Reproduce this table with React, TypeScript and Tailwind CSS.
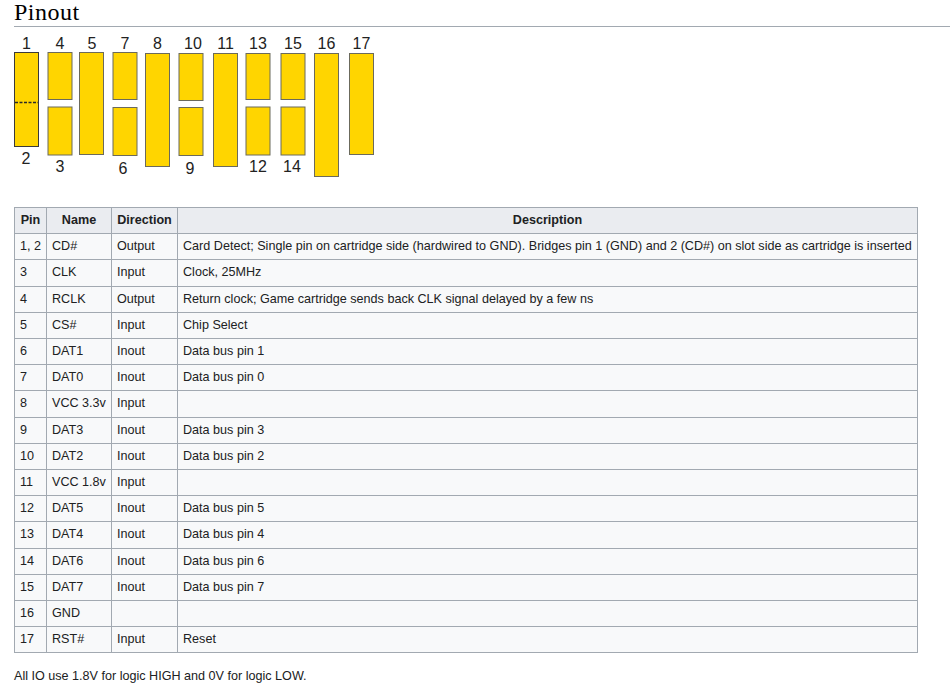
const pins: [string, string, string, string][] = [
  ["1, 2", "CD#", "Output", "Card Detect; Single pin on cartridge side (hardwired to GND). Bridges pin 1 (GND) and 2 (CD#) on slot side as cartridge is inserted"],
  ["3", "CLK", "Input", "Clock, 25MHz"],
  ["4", "RCLK", "Output", "Return clock; Game cartridge sends back CLK signal delayed by a few ns"],
  ["5", "CS#", "Input", "Chip Select"],
  ["6", "DAT1", "Inout", "Data bus pin 1"],
  ["7", "DAT0", "Inout", "Data bus pin 0"],
  ["8", "VCC 3.3v", "Input", ""],
  ["9", "DAT3", "Inout", "Data bus pin 3"],
  ["10", "DAT2", "Inout", "Data bus pin 2"],
  ["11", "VCC 1.8v", "Input", ""],
  ["12", "DAT5", "Inout", "Data bus pin 5"],
  ["13", "DAT4", "Inout", "Data bus pin 4"],
  ["14", "DAT6", "Inout", "Data bus pin 6"],
  ["15", "DAT7", "Inout", "Data bus pin 7"],
  ["16", "GND", "", ""],
  ["17", "RST#", "Input", "Reset"],
];

// contact pads, in page coordinates
const pads = [
  { x: 14, y: 52, h: 94, dark: true },
  { x: 47.5, y: 52, h: 47 },
  { x: 47.5, y: 106.5, h: 48 },
  { x: 79, y: 52, h: 102 },
  { x: 112.5, y: 52, h: 47 },
  { x: 112.5, y: 107, h: 48 },
  { x: 145, y: 53, h: 113 },
  { x: 178.5, y: 53, h: 47 },
  { x: 178.5, y: 107, h: 48 },
  { x: 213, y: 53, h: 113 },
  { x: 245.5, y: 53, h: 46 },
  { x: 245.5, y: 106.5, h: 48 },
  { x: 280.5, y: 53, h: 46 },
  { x: 280.5, y: 106.5, h: 48 },
  { x: 314, y: 53, h: 123 },
  { x: 349, y: 53, h: 101 },
];

const labels: [string, number, number][] = [
  ["1", 26.5, 49], ["4", 60, 49], ["5", 92, 49], ["7", 125, 49], ["8", 157.5, 49],
  ["10", 193, 49], ["11", 225.5, 49], ["13", 258, 49], ["15", 293, 49], ["16", 326.5, 49], ["17", 361.5, 49],
  ["2", 26, 164], ["3", 60, 172], ["6", 123, 174], ["9", 190, 174], ["12", 258, 172], ["14", 292, 172],
];

function PinDiagram() {
  return (
    <svg width="400" height="160" viewBox="0 27 400 160" className="block -ml-[14px]">
      {pads.map((p, i) => (
        <rect
          key={i}
          x={p.x + 0.5}
          y={p.y + 0.5}
          width={24}
          height={p.h}
          fill="#ffd500"
          stroke={p.dark ? "#3a3a3a" : "#6b6a5c"}
          strokeWidth={1}
        />
      ))}
      <line x1="15" y1="102.5" x2="38" y2="102.5" stroke="#2a2a2a" strokeWidth="1.6" strokeDasharray="3 1.5" />
      {labels.map(([t, x, y]) => (
        <text key={t} x={x} y={y} textAnchor="middle" fontSize="16" fill="#222" fontFamily="'Liberation Sans', Arial, sans-serif">
          {t}
        </text>
      ))}
    </svg>
  );
}

export default function App() {
  const cell = "border border-[#a2a9b1] px-[5px] py-[3px] leading-[19.2px] align-middle";
  return (
    <div className="min-h-[700px] bg-white pl-[14px] text-[#202122] font-['Liberation_Sans',Arial,sans-serif] text-[12.6px]">
      <h2 className="h-[27px] border-b border-[#a2a9b1] pb-[2px] font-['Liberation_Serif',Georgia,serif] text-[24px] leading-[24px] tracking-[0.5px] text-black">
        Pinout
      </h2>
      <PinDiagram />
      <table className="mt-[20px] w-[904px] table-fixed border-collapse border border-[#a2a9b1] bg-[#f8f9fa]">
        <thead>
          <tr className="bg-[#eaecf0] font-bold">
            <th className={`${cell} w-[32px] text-center`}>Pin</th>
            <th className={`${cell} w-[65px] text-center`}>Name</th>
            <th className={`${cell} w-[66px] text-center`}>Direction</th>
            <th className={`${cell} text-center`}>Description</th>
          </tr>
        </thead>
        <tbody>
          {pins.map(([pin, name, dir, desc]) => (
            <tr key={pin}>
              <td className={`${cell} whitespace-nowrap`}>{pin}</td>
              <td className={`${cell} whitespace-nowrap`}>{name}</td>
              <td className={cell}>{dir}</td>
              <td className={`${cell} whitespace-nowrap`}>{desc}</td>
            </tr>
          ))}
        </tbody>
      </table>
      <p className="mt-[13px] leading-[20px]">All IO use 1.8V for logic HIGH and 0V for logic LOW.</p>
    </div>
  );
}
